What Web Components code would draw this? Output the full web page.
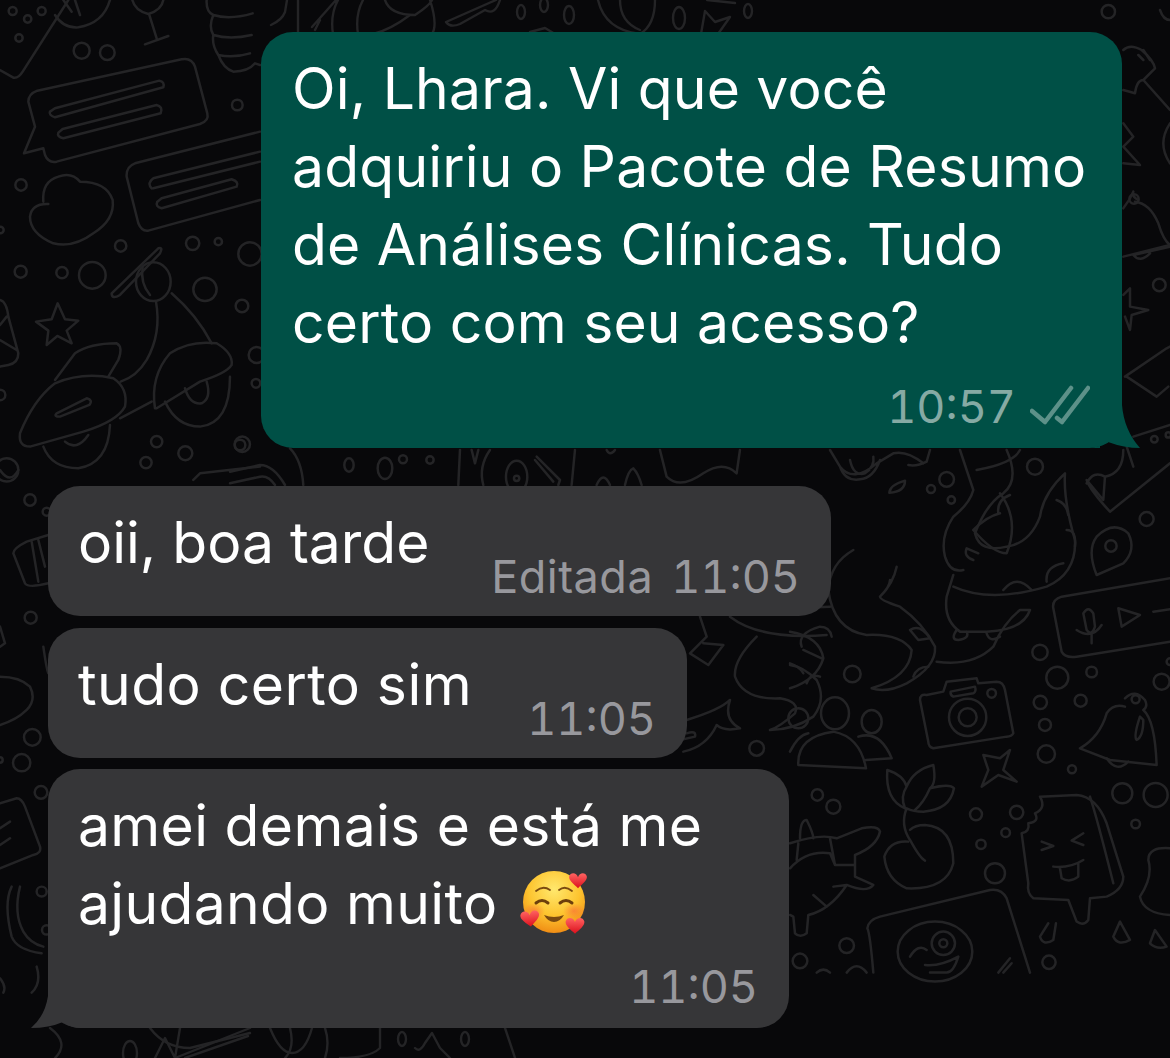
<!DOCTYPE html>
<html lang="pt-BR">
<head>
<meta charset="utf-8">
<title>Conversa</title>
<style>
html,body{margin:0;padding:0;background:#08080a}
body{width:1170px;height:1058px;overflow:hidden;display:grid;font-family:Inter,"Liberation Sans",sans-serif}
body>*{grid-area:1/1}
</style>
</head>
<body>
<chat-wallpaper></chat-wallpaper>
<chat-thread>
  <chat-bubble kind="out" style="--w:861px;--h:416px">
    Oi, Lhara. Vi que você<br>adquiriu o Pacote de Resumo<br>de Análises Clínicas. Tudo<br>certo com seu acesso?
    <span slot="meta">10:57</span><read-ticks slot="meta"></read-ticks>
  </chat-bubble>
  <chat-bubble kind="in" inline style="--w:783px;--h:130px;--mt:38px;letter-spacing:0">
    oii, boa tarde
    <span slot="meta" style="margin-right:4px;letter-spacing:.5px">Editada</span><span slot="meta">11:05</span>
  </chat-bubble>
  <chat-bubble kind="in" inline style="--w:639px;--h:130px;--mt:12px;letter-spacing:.45px">
    tudo certo sim
    <span slot="meta">11:05</span>
  </chat-bubble>
  <chat-bubble kind="in" tail style="--w:741px;--h:259px;--mt:11px">
    amei demais e está me<br>ajudando muito <hearts-emoji></hearts-emoji>
    <span slot="meta">11:05</span>
  </chat-bubble>
</chat-thread>
<script>
class ChatThread extends HTMLElement{
  constructor(){super();this.attachShadow({mode:'open'}).innerHTML=`<style>
  :host{display:flex;flex-direction:column;align-items:flex-start;padding:32px 48px 0;box-sizing:border-box;width:1170px;height:1058px;position:relative}
  </style><slot></slot>`}
}
class ChatBubble extends HTMLElement{
  constructor(){super();this.attachShadow({mode:'open'}).innerHTML=`<style>
  :host{display:flex;flex-direction:column;box-sizing:border-box;position:relative;width:var(--w);height:var(--h);margin-top:var(--mt,0);
    padding:18px 32px 0 30px;border-radius:32px;background:#363638;color:#fff;font-size:57px;line-height:78px;letter-spacing:.32px;font-weight:400}
  :host([kind=out]){background:#005046;align-self:flex-end;padding-left:31px;letter-spacing:.2px}
  :host([kind=in]){padding-right:31px}
  .meta{display:flex;justify-content:flex-end;align-items:center;gap:14px;font-size:45px;line-height:54px;letter-spacing:0;font-feature-settings:"tnum";color:#98989d;font-weight:400}
  :host([kind=out]) .meta{color:#86aaa4;margin-top:18px}
  :host([inline]) .body{height:78px}
  :host([inline]) .meta{margin-top:-32px}
  :host([tail]) .meta{margin-top:17px}
  .tail{display:none;position:absolute;fill:currentColor;overflow:visible}
  :host([kind=out]) .tail.out{display:block;right:-18px;bottom:0;width:40px;height:48px;color:#005046}
  :host([tail]) .tail.inc{display:block;left:-17px;bottom:0;width:50px;height:40px;color:#363638}
  </style>
  <div class="body"><slot></slot></div>
  <div class="meta"><slot name="meta"></slot></div>
  <svg class="tail out" viewBox="0 0 40 48"><path d="M0 0H22V5Q24 30 40 48Q24 48 8 42Q2 46-10 48H0Z"/></svg>
  <svg class="tail inc" viewBox="0 0 50 40"><path d="M17 0V8Q14 28 0 40Q18 40 32 34Q40 40 50 40V0Z"/></svg>`}
}
class ReadTicks extends HTMLElement{
  constructor(){super();this.attachShadow({mode:'open'}).innerHTML=`<style>
  :host{display:inline-flex;width:60px;height:44px}
  svg{width:60px;height:44px;fill:none;stroke:#5d9189;stroke-width:4.5;stroke-linecap:round;stroke-linejoin:round}
  </style><svg viewBox="0 0 60 44"><path d="M2 26L15 37L41 3"/><path d="M27 33L32 37L58 3"/></svg>`}
}
class HeartsEmoji extends HTMLElement{
  constructor(){super();this.attachShadow({mode:'open'}).innerHTML=`<style>
  :host{display:inline-block;width:66px;height:68px;vertical-align:-11px;margin-left:8px}
  svg{display:block;width:66px;height:68px;overflow:visible}
  </style><svg viewBox="0 0 66 68">
  <defs><radialGradient id="f" cx=".5" cy=".3" r=".75"><stop offset="0" stop-color="#ffe86e"/><stop offset=".55" stop-color="#fdc42f"/><stop offset="1" stop-color="#ee8410"/></radialGradient>
  <radialGradient id="c" cx=".5" cy=".5" r=".5"><stop offset="0" stop-color="#f9683a" stop-opacity=".6"/><stop offset="1" stop-color="#f9683a" stop-opacity="0"/></radialGradient>
  <linearGradient id="h" x1="0" y1="0" x2="0" y2="1"><stop offset="0" stop-color="#ff6361"/><stop offset="1" stop-color="#dc0f1c"/></linearGradient>
  <path id="hp" d="M0-4C-2-11-11-12-13-5C-14 1-5 7 0 12C5 7 14 1 13-5C11-12 2-11 0-4Z"/></defs>
  <circle cx="32" cy="35" r="31" fill="url(#f)"/>
  <ellipse cx="12" cy="44" rx="11" ry="8" fill="url(#c)"/><ellipse cx="52" cy="44" rx="11" ry="8" fill="url(#c)"/>
  <g fill="none" stroke="#7a4a10" stroke-width="1.8" stroke-linecap="round"><path d="M14 24Q21 18 28 23"/><path d="M37 23Q43 18 50 24"/></g>
  <g fill="none" stroke="#6d3f0c" stroke-width="3" stroke-linecap="round"><path d="M14 36Q20 31 26 36"/><path d="M38 36Q44 31 50 36"/></g>
  <path d="M22 48Q32 52 42 48Q38 55 32 55Q26 55 22 48Z" fill="#7a4a10"/>
  <g fill="url(#h)"><use href="#hp" transform="translate(56 13) scale(.68)"/><use href="#hp" transform="translate(8 51) rotate(-6) scale(.72)"/><use href="#hp" transform="translate(53 58) scale(.72)"/></g>
  </svg>`}
}
const c=(x,y,r,ry)=>ry?`<ellipse cx="${x}" cy="${y}" rx="${r}" ry="${ry}"/>`:`<circle cx="${x}" cy="${y}" r="${r}"/>`;
const left=`<g transform="scale(.3333)">
<path d="M0 210L40 233Q55 236 68 215L205 0"/><path d="M165 45Q190 85 235 82Q310 70 330 0"/><path d="M225 0L240 45M190 0L215 35"/>
${c(245,152,24)}${c(322,158,22)}${c(38,33,12)}${c(83,57,11)}${c(125,33,12)}${c(57,114,11)}
<path d="M397 0Q405 32 445 42Q485 30 490 0M448 45L470 115M435 133L505 108"/>
<path d="M620 0Q618 35 640 45Q625 80 640 105Q635 135 655 165Q670 205 700 215Q745 215 765 190L780 195M640 45Q690 60 758 40M640 105Q690 120 755 105M655 165Q700 175 750 160"/>
<path d="M85 305Q85 282 112 272L545 178Q575 172 585 200L622 340Q628 362 600 372L170 485Q145 490 135 465L130 445L72 460L105 380Z"/>
<path d="M165 325L478 242Q495 245 490 262L165 352Q145 345 150 335Z"/><path d="M188 387L470 315Q490 320 482 340L190 415Q170 410 175 398Z"/>
<path d="M780 395L405 490Q378 500 380 530L415 670Q425 695 445 692L780 600"/>
<path d="M460 535L780 455M460 565L780 485M460 535Q440 550 455 565"/><path d="M485 595L695 538Q718 545 710 560L485 625Q465 620 472 605Z"/>
<path d="M130 605Q125 545 175 530Q215 515 240 545Q320 545 338 600Q345 660 280 700Q220 745 160 730Q90 700 90 650Q95 610 145 612"/>
${c(63,555,17)}${c(362,738,17)}${c(578,730,20)}${c(655,725,11)}${c(750,762,35)}${c(62,815,18)}${c(186,818,17)}${c(277,826,40)}${c(615,868,35)}${c(726,918,19)}${c(712,315,16)}${c(1,690,10)}
<path d="M173 910L195 958L235 962L200 992L215 1030L172 1008L140 1035L145 992L108 965L155 958Z"/>
<path d="M0 900Q20 905 25 950L55 1060Q55 1090 25 1095L0 1100M0 975L20 950M0 1020L50 1050"/>
<path d="M335 880L475 745Q490 740 480 760L360 885Q335 900 335 880Z"/>
${c(460,845,52,58)}<path d="M428 800Q420 850 450 885M515 880Q590 945 635 1030"/>
<path d="M468 905Q485 1000 440 1080Q410 1130 362 1145M165 1140L225 1060Q270 1030 350 1030Q370 1040 355 1080L325 1130"/>
<path d="M60 1300Q100 1200 165 1150Q250 1115 340 1135Q385 1165 375 1220Q350 1265 250 1295L90 1340Q55 1340 60 1300Z"/>
<path d="M170 1240L260 1195Q280 1200 268 1215L180 1250Q160 1250 170 1240Z"/>
<path d="M130 1340Q155 1405 235 1405Q325 1390 330 1275M195 1325Q230 1355 265 1305"/>
<path d="M360 1255L455 1205M465 1225Q450 1130 510 1060Q570 1020 650 1030Q700 1060 695 1095Q680 1120 600 1145L470 1225Z"/>
<path d="M495 1205Q530 1280 600 1280Q690 1270 690 1130M555 1165Q570 1215 605 1210Q635 1195 620 1145"/>
${c(470,1325,17)}${c(556,1360,21)}${c(438,1388,17)}${c(727,1333,23)}${c(20,1410,35)}${c(770,1065,24)}${c(768,1150,13)}${c(0,1185,16)}
<path d="M580 1440L600 1420L780 1400"/>
</g>`;
const right=`<g transform="translate(790 450) scale(.3333)">
<path d="M120 0L150 50Q190 100 260 40L310 10Q350 0 400 40M420 0L410 35Q380 50 355 45M150 50Q165 95 210 88Q250 85 270 30M180 30Q190 80 225 70Q255 50 250 20"/>
<path d="M298 128Q300 105 345 92Q345 125 298 128Z"/>${c(423,117,12)}${c(470,88,22)}${c(484,150,11)}${c(735,50,24)}${c(1070,207,21)}
<path d="M510 0L550 120Q540 160 490 200Q450 260 465 320Q480 370 520 360M560 60Q670 40 690 0M630 130Q690 210 650 310Q610 310 550 240M550 240Q590 200 630 190"/>
<path d="M650 0Q690 90 640 130Q590 160 555 250Q570 310 650 290Q720 280 750 200Q760 130 825 70Q820 150 855 270Q860 370 770 410Q600 460 490 410"/>
<path d="M625 190Q620 150 660 135M800 150Q830 160 835 195M550 330Q520 320 530 295L565 310M830 240Q860 240 855 290M770 395Q765 350 820 340M640 420Q680 370 725 420"/>
<path d="M490 375L470 440Q460 510 510 545L590 545Q700 540 720 480L690 480Q640 520 610 590Q550 650 440 635M500 540Q480 570 505 570Q540 565 530 545M590 550Q600 580 630 560"/>
<path d="M890 100Q910 60 945 80L940 150L890 90Q900 120 960 185L1140 40M1000 0Q1000 70 945 80"/>
<path d="M920 375Q890 300 920 260Q970 210 1015 250Q1040 300 1000 340Z"/>${c(963,288,17)}
<path d="M1140 385L815 440Q785 450 790 475L815 605Q825 625 860 620L1140 575"/>
<path d="M880 490Q895 465 910 490L915 530Q905 560 890 540ZM860 540Q905 570 935 525M905 555V580"/><path d="M985 475L1050 495L995 530Z"/><path d="M1090 485L1140 478"/>
${c(750,607,23)}${c(802,683,33)}${c(905,666,16)}${c(751,757,20)}${c(765,825,18)}${c(872,752,18)}${c(769,912,26)}${c(846,958,12)}${c(1115,695,24)}${c(1140,635,10)}
<path d="M0 480Q60 470 120 470M190 300Q120 340 115 420Q130 540 230 555Q330 550 365 600Q360 680 245 715Q290 730 350 700Q440 650 435 590Q400 520 330 470Q270 450 270 440Q310 400 320 350M270 440Q300 410 300 390"/>
<path d="M360 540Q390 520 420 565L385 570ZM370 680Q380 650 415 650M0 545Q90 560 100 625Q80 690 0 715M35 590Q20 550 90 530Q120 530 125 560M40 600L95 625M0 640Q30 650 40 670M50 700Q60 670 90 680"/>
${c(187,672,25)}
<g><path d="M390 750Q390 730 410 735L460 725L470 695L560 685L565 700L620 695Q640 695 645 720L670 850Q665 860 650 860L430 895Q415 890 415 875Z"/>
<path d="M482 725L555 710Q560 725 550 730L490 740Q480 735 482 725Z"/>${c(605,730,13)}${c(533,802,56)}${c(533,802,27)}</g>
<path d="M1005 745Q1035 715 1065 750Q1075 770 1060 780Q1095 810 1100 945L960 930L870 895Q930 860 950 790Q970 760 1005 770"/>${c(1037,748,12)}
<path d="M1050 800Q1030 860 1040 870Q1060 860 1060 810Z"/><path d="M950 925Q980 970 1015 935"/>
${c(135,790,42,48)}${c(25,805,30)}${c(245,815,30,35)}<path d="M25 945Q20 860 130 845Q210 860 228 955L25 945M0 905Q25 855 55 850M205 860Q270 840 305 925L228 930"/>
<path d="M580 915L630 925L660 900L640 960L680 995L625 975L575 1010L595 960Z"/>
${c(82,1035,17)}${c(130,1070,21)}${c(558,1093,18)}${c(680,1087,20)}${c(647,1148,13)}${c(573,1183,14)}${c(615,1270,30)}${c(997,1030,30)}${c(1097,1035,36)}${c(1037,1122,13)}
<path d="M345 1075Q285 1050 292 960Q340 975 350 1010Q370 960 430 945Q440 1000 420 1015Q480 1000 492 1015Q480 1080 400 1085Q370 1085 350 1075Q330 1125 360 1170Q390 1225 405 1232M350 1010Q330 1040 345 1075M420 1015Q400 1060 375 1080"/>
<path d="M355 1175Q300 1170 283 1220Q290 1290 350 1315Q470 1320 490 1240Q490 1130 405 1125Q375 1125 360 1140"/>
<path d="M0 1180Q90 1150 140 1165L215 1135Q265 1125 270 1145Q260 1190 195 1215L195 1280L250 1305Q230 1330 170 1305Q120 1380 55 1395L50 1450Q30 1465 15 1450L10 1400L0 1395M30 1165Q30 1110 50 1110Q70 1150 70 1165M120 1165L135 1245L195 1245M70 1335L110 1370M0 1255Q50 1200 120 1210L135 1245M130 1310L170 1305M25 1180L20 1230"/>
<path d="M750 1040L860 1035Q920 1040 950 1120L1000 1280Q1000 1320 950 1340L900 1345L895 1410Q880 1430 860 1415L835 1350L730 1345Q710 1330 715 1300L695 1150Q720 1145 715 1120Q750 1115 735 1090Q770 1075 750 1040Z"/>
<path d="M900 1040Q920 1100 970 1300M755 1175L790 1188L755 1200M880 1150L845 1172L880 1185M790 1250Q840 1255 880 1230M810 1255L815 1285Q840 1300 865 1280L865 1240"/>
<path d="M775 1420L750 1460Q760 1490 790 1470L798 1420M990 1415L970 1460Q985 1490 1020 1470ZM1095 1440L1080 1480Q1100 1500 1130 1490Z"/>
<path d="M1140 1195Q1075 1190 1075 1230Q1090 1280 1050 1340Q1060 1390 1140 1395"/>
<path d="M250 1568Q240 1450 232 1435Q235 1410 270 1400L600 1320Q635 1315 650 1345L720 1568"/>
${c(435,1505,112,90)}${c(460,1480,35)}${c(460,1480,12)}<path d="M360 1520Q385 1480 410 1500M405 1545Q450 1550 505 1520Q490 1568 470 1568H420M625 1568L660 1525M640 1568L665 1540"/>
${c(170,1487,22)}${c(30,1533,22)}${c(777,1537,20)}<path d="M170 1568Q200 1530 230 1568M80 1568Q100 1550 120 1568"/>
</g>`;
const extra=`<g transform="translate(260 0)" stroke-width="2.4">
<path d="M11 25Q22 20 25 12L27 0M38 34V0M52 27L76 0M55 30L60 20M73 34Q70 15 78 0M98 34Q95 15 103 0M125 0Q130 15 155 15Q170 5 172 0M113 34Q130 30 150 15M170 0Q178 25 172 34M186 22L236 0M186 22Q190 28 200 24L225 10Q235 16 240 0"/>
<ellipse cx="261" cy="12" rx="4" ry="7"/><ellipse cx="284" cy="5" rx="4" ry="7"/><ellipse cx="309" cy="15" rx="5" ry="9"/>
<path d="M338 0Q345 30 380 34M395 0Q395 25 380 34M447 0L475 3M360 0Q360 22 380 30"/><ellipse cx="419" cy="18" rx="6" ry="11"/><ellipse cx="488" cy="11" rx="4" ry="7"/>
<path d="M441 34L445 11L455 22L470 17L458 34"/><path d="M270 32L285 28L295 34"/>
</g>
<g transform="translate(1100 0) scale(.3333)">
${c(25,35,20)}<path d="M180 30Q190 60 210 60M70 150Q90 130 125 150Q160 180 165 205L130 240Q110 240 105 280L70 270M130 240L210 330M210 370Q170 430 210 490M115 165L130 180M130 150L150 180"/>
<path d="M70 370L100 410L70 440L120 495L70 490"/>
<path d="M70 625Q90 600 100 575M105 605Q150 610 175 670Q190 720 210 735L70 770M115 600Q95 590 100 575"/>${c(102,597,14)}<path d="M210 740L100 765Q120 790 150 760"/>${c(178,855,19)}
<path d="M70 885L90 865L90 920L145 930L95 945L90 990L75 950"/>
<path d="M75 1130L200 1045L210 1040M80 1130L170 1190L205 1160"/>
<path d="M100 1310L210 1275"/>${c(163,1318,10)}${c(205,1305,8)}<path d="M80 1340L100 1400"/>
</g>
<g transform="translate(0 470) scale(.3333)">
${c(90,90,17)}${c(140,125,12)}<path d="M0 0Q30 45 55 0"/>
<path d="M145 195L80 215Q40 235 40 250L75 340Q85 355 145 340M95 215L115 335M115 210L135 290"/>
${c(92,443,18)}<path d="M0 470L15 520L0 530M130 530Q140 600 145 610"/>
<path d="M0 620Q60 620 90 650Q110 690 80 720Q50 750 0 765"/>
${c(97,802,25)}${c(65,878,26)}${c(0,870,8)}${c(123,967,19)}
<path d="M0 1000L50 985Q65 985 75 1010L120 1130Q125 1150 100 1155L0 1195M0 1075L30 1055M0 1125L30 1105"/>
<path d="M35 1250Q10 1300 35 1400Q50 1440 125 1450M60 1250Q40 1330 70 1385Q90 1420 130 1430"/>${c(125,1265,15)}${c(140,1380,14)}
<path d="M110 1490Q125 1540 95 1568M0 1525Q20 1550 10 1568"/>
</g>
<g transform="translate(230 440) scale(.3333)">
<path d="M0 95L90 75Q130 75 165 135M0 130L90 110Q115 105 135 135M180 25Q215 60 220 135"/>${c(30,15,16)}
<ellipse cx="357" cy="75" rx="14" ry="20"/><ellipse cx="465" cy="85" rx="22" ry="32"/>${c(519,58,12)}${c(600,60,11)}
<path d="M690 30L685 135M725 30L735 70L745 30M780 30Q745 80 760 135"/><ellipse cx="860" cy="110" rx="32" ry="48"/>${c(860,115,8)}
<path d="M920 50L990 120L985 135M915 60L970 125M1035 30L1025 135M1100 135Q1120 90 1140 135M1185 135Q1195 90 1210 85Q1225 100 1235 135M1130 30Q1140 50 1155 30"/>
<path d="M1290 30L1310 110Q1350 150 1420 100Q1480 60 1520 100L1530 30"/>
</g>
<g transform="translate(680 610) scale(.3333)">
<path d="M60 20L80 80L30 130L85 165L130 105L70 100M150 20Q240 90 440 75M230 80Q160 150 165 200Q190 270 300 265Q360 275 345 310Q300 350 270 360Q340 360 400 320Q440 270 410 210Q370 170 330 165M20 330Q120 300 150 270Q130 330 180 355Q130 365 110 345Q80 410 10 425M20 370Q50 360 45 380L0 390"/>
${c(230,415,22)}
</g>
<g transform="translate(0 1028)" stroke-width="2.4">
<path d="M50 0Q70 15 55 30M150 0Q165 20 190 20L250 5M290 0Q295 20 285 30"/><ellipse cx="130" cy="25" rx="7" ry="12"/>
<path d="M155 30L165 10L175 30M180 0L175 30M175 30L250 0"/><path d="M185 30L248 8"/>
<path d="M270 0Q280 25 292 25Q305 25 312 0M325 30Q330 15 325 0M380 0L380 20Q370 30 340 30"/>
<ellipse cx="402" cy="11" rx="4" ry="7"/><path d="M415 20Q420 25 425 15L432 5L440 20L450 30"/><ellipse cx="465" cy="11" rx="4" ry="7"/>
<path d="M505 0L515 30"/>
</g>`;
class ChatWallpaper extends HTMLElement{
  constructor(){super();this.attachShadow({mode:'open'}).innerHTML=`<style>
  :host{display:block;width:1170px;height:1058px;background:#08080a}
  svg{display:block;width:1170px;height:1058px;fill:none;stroke:#242426;stroke-linecap:round;stroke-linejoin:round;stroke-width:7.5;filter:blur(.4px)}
  </style><svg viewBox="0 0 1170 1058">${left}${right}${extra}</svg>`}
}
customElements.define('chat-wallpaper',ChatWallpaper);
customElements.define('chat-thread',ChatThread);
customElements.define('chat-bubble',ChatBubble);
customElements.define('read-ticks',ReadTicks);
customElements.define('hearts-emoji',HeartsEmoji);
</script>
</body>
</html>
